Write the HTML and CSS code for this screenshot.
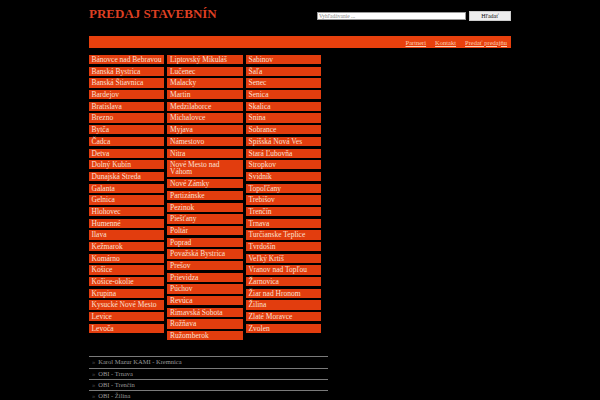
FILE: index.html
```html
<!DOCTYPE html>
<html lang="sk">
<head>
<meta charset="utf-8">
<title>Predaj stavebnín</title>
<link rel="stylesheet" href="styles.css">
</head>
<body>
<div class="page">
  <header class="header">
    <h1 class="title">PREDAJ STAVEBNÍN</h1>
    <form class="search">
      <input class="search-input" type="text" placeholder="Vyhľadávanie ...">
      <button class="search-btn" type="button">Hľadať</button>
    </form>
  </header>
  <nav class="nav">
    <a href="#">Partneri</a>
    <a href="#">Kontakt</a>
    <a href="#">Predať predajňu</a>
  </nav>
  <div class="cols">
    <ul class="col">
      <li>Bánovce nad Bebravou</li>
      <li>Banská Bystrica</li>
      <li>Banská Štiavnica</li>
      <li>Bardejov</li>
      <li>Bratislava</li>
      <li>Brezno</li>
      <li>Bytča</li>
      <li>Čadca</li>
      <li>Detva</li>
      <li>Dolný Kubín</li>
      <li>Dunajská Streda</li>
      <li>Galanta</li>
      <li>Gelnica</li>
      <li>Hlohovec</li>
      <li>Humenné</li>
      <li>Ilava</li>
      <li>Kežmarok</li>
      <li>Komárno</li>
      <li>Košice</li>
      <li>Košice-okolie</li>
      <li>Krupina</li>
      <li>Kysucké Nové Mesto</li>
      <li>Levice</li>
      <li>Levoča</li>
    </ul>
    <ul class="col">
      <li>Liptovský Mikuláš</li>
      <li>Lučenec</li>
      <li>Malacky</li>
      <li>Martin</li>
      <li>Medzilaborce</li>
      <li>Michalovce</li>
      <li>Myjava</li>
      <li>Námestovo</li>
      <li>Nitra</li>
      <li>Nové Mesto nad Váhom</li>
      <li>Nové Zámky</li>
      <li>Partizánske</li>
      <li>Pezinok</li>
      <li>Piešťany</li>
      <li>Poltár</li>
      <li>Poprad</li>
      <li>Považská Bystrica</li>
      <li>Prešov</li>
      <li>Prievidza</li>
      <li>Púchov</li>
      <li>Revúca</li>
      <li>Rimavská Sobota</li>
      <li>Rožňava</li>
      <li>Ružomberok</li>
    </ul>
    <ul class="col">
      <li>Sabinov</li>
      <li>Šaľa</li>
      <li>Senec</li>
      <li>Senica</li>
      <li>Skalica</li>
      <li>Snina</li>
      <li>Sobrance</li>
      <li>Spišská Nová Ves</li>
      <li>Stará Ľubovňa</li>
      <li>Stropkov</li>
      <li>Svidník</li>
      <li>Topoľčany</li>
      <li>Trebišov</li>
      <li>Trenčín</li>
      <li>Trnava</li>
      <li>Turčianske Teplice</li>
      <li>Tvrdošín</li>
      <li>Veľký Krtíš</li>
      <li>Vranov nad Topľou</li>
      <li>Žarnovica</li>
      <li>Žiar nad Hronom</li>
      <li>Žilina</li>
      <li>Zlaté Moravce</li>
      <li>Zvolen</li>
    </ul>
  </div>
  <ul class="latest">
    <li><span class="arrow">»</span>Karol Mazur KAMI - Kremnica</li>
    <li><span class="arrow">»</span>OBI - Trnava</li>
    <li><span class="arrow">»</span>OBI - Trenčín</li>
    <li><span class="arrow">»</span>OBI - Žilina</li>
  </ul>
</div>
</body>
</html>
```
FILE: styles.css
```css
html, body {
  margin: 0;
  padding: 0;
  background: #000;
}
body {
  font-family: "Liberation Serif", "Times New Roman", serif;
}
.page {
  width: 422px;
  margin: 0 auto;
}
.header {
  display: flex;
  justify-content: space-between;
  align-items: flex-start;
  height: 36px;
}
.title {
  margin: 0;
  padding-top: 6px;
  font-size: 13px;
  line-height: 15px;
  font-weight: bold;
  color: #dc3f22;
}
.search {
  display: flex;
  align-items: center;
  gap: 3px;
  margin: 0;
  padding-top: 11px;
  height: 10px;
}
.search-input {
  box-sizing: border-box;
  width: 149px;
  height: 8px;
  margin: 0;
  padding: 0 1px;
  border: 1px solid #999;
  background: #fff;
  font-family: "Liberation Serif", serif;
  font-size: 5.5px;
  outline: none;
}
.search-input::placeholder {
  color: #888;
}
.search-btn {
  box-sizing: border-box;
  width: 42px;
  height: 10px;
  margin: 0;
  padding: 0;
  border: 1px solid #ccc;
  background: #eeeeee;
  color: #111;
  font-family: "Liberation Serif", serif;
  font-size: 6px;
  line-height: 8px;
}
.nav {
  height: 12px;
  background: #e8400d;
  display: flex;
  justify-content: flex-end;
  align-items: center;
  gap: 9px;
  padding-right: 4px;
}
.nav a {
  color: #fbd0b4;
  font-size: 6.5px;
  text-decoration: underline;
}
.cols {
  display: flex;
  gap: 3.2px;
  margin-top: 7px;
  align-items: flex-start;
}
.col {
  list-style: none;
  margin: 0;
  padding: 0;
  width: 75.3px;
  display: flex;
  flex-direction: column;
  gap: 2.4px;
}
.col li {
  background: #e23d0e;
  color: #fbe0d2;
  font-size: 7.5px;
  line-height: 7.3px;
  padding: 1px 2.5px;
}
.latest {
  list-style: none;
  margin: 16px 0 0 0;
  padding: 0;
  width: 239px;
}
.latest li {
  border-top: 1px solid #7a7a7a;
  height: 10.3px;
  line-height: 10.3px;
  font-size: 6.5px;
  color: #9a9a9a;
  padding-left: 3px;
}
.latest .arrow {
  color: #555;
  margin-right: 3px;
}
```
